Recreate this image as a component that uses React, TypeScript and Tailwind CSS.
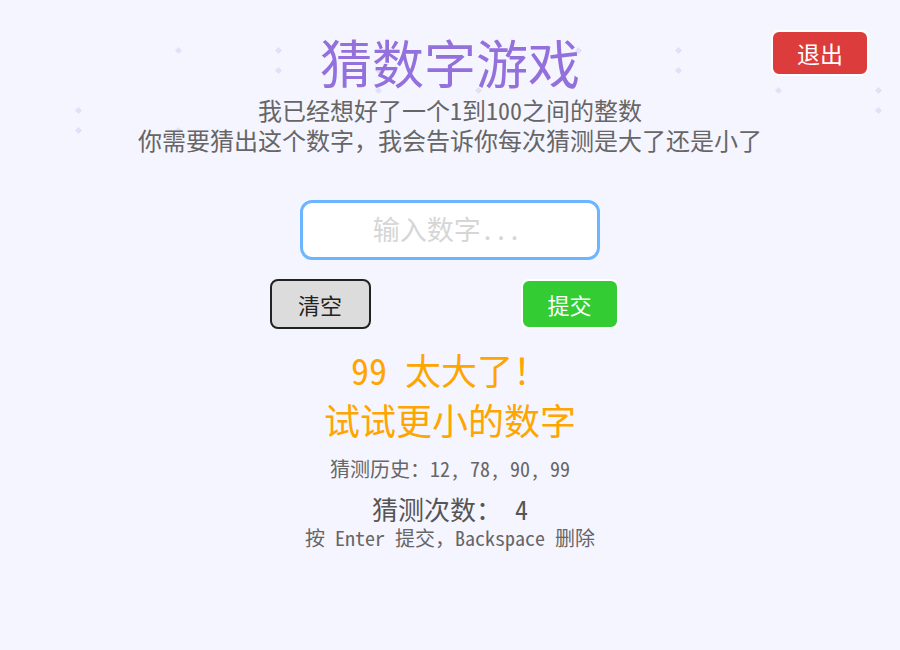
import React, { useState } from "react";

// faint diamond sparkles behind the header
const DOTS: [number, number][] = [
  [178, 50], [278, 50], [278, 70], [378, 70], [378, 90], [478, 90],
  [578, 50], [678, 50], [678, 70], [778, 90], [878, 90], [878, 110],
  [78, 110], [78, 130], [178, 130],
];

const FONT = { fontFamily: '"Noto Sans Mono CJK SC", "Noto Sans CJK SC", monospace' };

export default function App() {
  const [value, setValue] = useState("");
  const history = [12, 78, 90, 99];

  return (
    <div className="relative w-[900px] h-[650px] overflow-hidden bg-[#f5f5ff]" style={FONT}>
      {DOTS.map(([x, y], i) => (
        <span
          key={i}
          className="absolute w-[5px] h-[5px] rotate-45 bg-[#e2e0f8]"
          style={{ left: x - 2, top: y - 2 }}
        />
      ))}

      <button className="absolute top-[30px] right-[31px] w-[98px] h-[46px] rounded-lg border-2 border-white bg-[#dc3c3c] text-white text-[23px] leading-none">
        退出
      </button>

      <div className="relative flex flex-col items-center pt-[36px]">
        <h1 className="text-[52px] leading-[52px] text-[#9370db]">猜数字游戏</h1>
        <div className="mt-[7px] flex flex-col gap-[1px] text-center text-[24px] leading-[29px] text-[#666]">
          <p>我已经想好了一个1到100之间的整数</p>
          <p>你需要猜出这个数字，我会告诉你每次猜测是大了还是小了</p>
        </div>

        <input
          value={value}
          onChange={(e) => setValue(e.target.value)}
          placeholder="输入数字..."
          className="mt-[46px] w-[300px] h-[60px] rounded-xl border-[3px] border-[#6cb6ff] bg-white pb-[3px] pr-[6px] text-center text-[27px] text-[#333] placeholder:text-[#d6d6d6] outline-none"
        />

        <div className="mt-[19px] flex gap-[150px] pr-[12px]">
          <button className="w-[101px] h-[50px] rounded-lg border-2 border-[#222] bg-[#dcdcdc] text-[22px] text-[#222]">
            清空
          </button>
          <button className="w-[98px] h-[50px] rounded-lg border-2 border-white bg-[#33cc33] text-[22px] text-white">
            提交
          </button>
        </div>

        <p className="mt-[18px] text-[36px] leading-[44px] text-[#ffa500]">99 太大了！</p>
        <p className="mt-[4px] text-[36px] leading-[48px] text-[#ffa500]">试试更小的数字</p>

        <p className="mt-[12px] text-[20px] leading-[28px] text-[#666]">
          猜测历史：{history.join(", ")}
        </p>
        <p className="mt-[11px] text-[26px] leading-[30px] text-[#555]">猜测次数： {history.length}</p>
        <p className="mt-[1px] text-[20px] leading-[26px] text-[#666]">按 Enter 提交，Backspace 删除</p>
      </div>
    </div>
  );
}
